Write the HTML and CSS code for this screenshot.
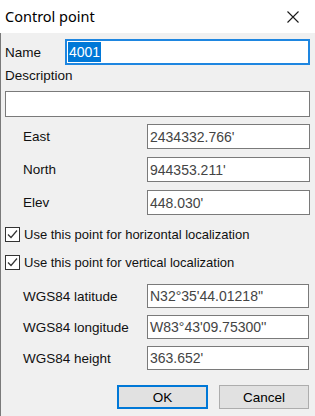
FILE: index.html
```html
<!DOCTYPE html>
<html lang="en">
<head>
  <meta charset="UTF-8">
  <title>Control point</title>
  <link rel="stylesheet" href="styles.css">
</head>
<body>

  <div class="dialog">
    <div class="titlebar">
      <span class="title">Control point</span>
      <svg class="close" width="12" height="12" viewBox="0 0 12 12">
        <path d="M0.5 0.5 L11.5 11.5 M11.5 0.5 L0.5 11.5" stroke="#1a1a1a" stroke-width="1.1" fill="none"/>
      </svg>
    </div>

    <div class="content">
      <div class="name-row">
        <label>Name</label>
        <div class="field focused"><span class="selected">4001</span></div>
      </div>

      <label class="desc-label">Description</label>
      <div class="field desc"></div>

      <div class="grid local">
        <label>East</label><div class="field">2434332.766'</div>
        <label>North</label><div class="field">944353.211'</div>
        <label>Elev</label><div class="field">448.030'</div>
      </div>

      <div class="checks">
        <div class="check">
          <span class="box"><svg width="13" height="13" viewBox="0 0 13 13"><polyline points="2,6.5 5,9.5 11,2.5" stroke="#333" stroke-width="1.2" fill="none"/></svg></span>
          Use this point for horizontal localization
        </div>
        <div class="check">
          <span class="box"><svg width="13" height="13" viewBox="0 0 13 13"><polyline points="2,6.5 5,9.5 11,2.5" stroke="#333" stroke-width="1.2" fill="none"/></svg></span>
          Use this point for vertical localization
        </div>
      </div>

      <div class="grid wgs">
        <label>WGS84 latitude</label><div class="field">N32°35'44.01218''</div>
        <label>WGS84 longitude</label><div class="field">W83°43'09.75300''</div>
        <label>WGS84 height</label><div class="field">363.652'</div>
      </div>

      <div class="buttons">
        <button class="btn default">OK</button>
        <button class="btn">Cancel</button>
      </div>
    </div>
  </div>

</body>
</html>
```

FILE: styles.css
```css
body {
  margin: 0;
  font-family: 'Liberation Sans', Arial, sans-serif;
  font-size: 13.5px;
  color: #111;
  background: #f0f0f0;
}
.dialog {
  width: 315px;
  height: 416px;
  background: #f0f0f0;
  overflow: hidden;
}
.titlebar {
  height: 33px;
  background: #fff;
  display: flex;
  align-items: center;
  justify-content: space-between;
  padding-left: 5px;
}
.title {
  font-family: 'Noto Sans', sans-serif;
  font-size: 14.5px;
  color: #000;
  margin-top: -1px;
}
.close {
  margin-right: 16px;
}
.content {
  height: 383px;
  border-left: 1px solid #7a7a7a;
  padding: 6px 4px 0 4px;
  box-sizing: border-box;
}
.field {
  height: 25px;
  box-sizing: border-box;
  border: 1px solid #7a7a7a;
  background: #fff;
  padding: 0 2px;
  display: flex;
  align-items: center;
  font-size: 14px;
  color: #444;
  white-space: nowrap;
}
.name-row {
  display: flex;
  align-items: center;
}
.name-row label {
  width: 60px;
}
.name-row .field {
  flex: 1;
  height: 26px;
  margin-right: 1px;
}
.field.focused {
  border: 2px solid #1e86e0;
  padding-left: 1px;
}
.selected {
  background: #0078d7;
  color: #fff;
  padding: 2px 1px;
}
.desc-label {
  display: block;
  margin-top: 3px;
  line-height: 16px;
}
.field.desc {
  margin-top: 7px;
  height: 26px;
  margin-right: 1px;
}
.grid {
  display: grid;
  grid-template-columns: 124px 1fr;
  align-items: center;
  padding-left: 18px;
  margin-right: 1px;
}
.local {
  margin-top: 7px;
  row-gap: 8px;
}
.checks {
  margin-top: 9px;
  display: flex;
  flex-direction: column;
  gap: 8px;
}
.check {
  display: flex;
  align-items: center;
  gap: 4px;
  height: 20px;
  font-size: 13px;
}
.box {
  width: 15px;
  height: 15px;
  box-sizing: border-box;
  border: 1px solid #333;
  background: #fff;
  display: flex;
  align-items: center;
  justify-content: center;
}
.wgs {
  margin-top: 12px;
  row-gap: 7px;
  margin-right: 2px;
}
.wgs .field {
  height: 24px;
}
.buttons {
  display: flex;
  justify-content: flex-end;
  gap: 11px;
  margin-top: 15px;
  margin-right: 2px;
}
.btn {
  height: 24px;
  width: 90px;
  background: #e1e1e1;
  border: 1px solid #adadad;
  font-family: 'Liberation Sans', Arial, sans-serif;
  font-size: 13.5px;
  color: #000;
  padding: 0;
}
.btn.default {
  width: 91px;
  border: 2px solid #0078d7;
}
```
